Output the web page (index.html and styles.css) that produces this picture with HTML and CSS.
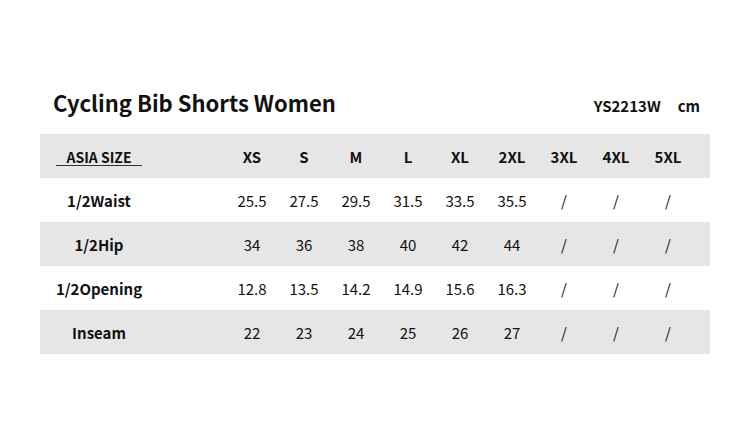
FILE: index.html
```html
<!DOCTYPE html>
<html>
<head>
<meta charset="utf-8">
<link rel="stylesheet" href="styles.css">
</head>
<body>
<div class="page">
  <div class="heading">
    <h1 class="title">Cycling Bib Shorts Women</h1>
    <div class="meta"><span class="code">YS2213W</span><span class="unit">cm</span></div>
  </div>
  <div class="table">
    <div class="row shade head">
      <div class="label"><span class="asia">ASIA SIZE</span></div>
      <div class="cell">XS</div><div class="cell">S</div><div class="cell">M</div><div class="cell">L</div><div class="cell">XL</div><div class="cell">2XL</div><div class="cell">3XL</div><div class="cell">4XL</div><div class="cell">5XL</div>
    </div>
    <div class="row">
      <div class="label">1/2Waist</div>
      <div class="cell">25.5</div><div class="cell">27.5</div><div class="cell">29.5</div><div class="cell">31.5</div><div class="cell">33.5</div><div class="cell">35.5</div><div class="cell">/</div><div class="cell">/</div><div class="cell">/</div>
    </div>
    <div class="row shade">
      <div class="label">1/2Hip</div>
      <div class="cell">34</div><div class="cell">36</div><div class="cell">38</div><div class="cell">40</div><div class="cell">42</div><div class="cell">44</div><div class="cell">/</div><div class="cell">/</div><div class="cell">/</div>
    </div>
    <div class="row">
      <div class="label">1/2Opening</div>
      <div class="cell">12.8</div><div class="cell">13.5</div><div class="cell">14.2</div><div class="cell">14.9</div><div class="cell">15.6</div><div class="cell">16.3</div><div class="cell">/</div><div class="cell">/</div><div class="cell">/</div>
    </div>
    <div class="row shade">
      <div class="label">Inseam</div>
      <div class="cell">22</div><div class="cell">23</div><div class="cell">24</div><div class="cell">25</div><div class="cell">26</div><div class="cell">27</div><div class="cell">/</div><div class="cell">/</div><div class="cell">/</div>
    </div>
  </div>
</div>
</body>
</html>
```

FILE: styles.css
```css
html, body {
  margin: 0;
  padding: 0;
  background: #fff;
}
body {
  font-family: "Noto Sans CJK SC", "Noto Sans", sans-serif;
  color: #111;
}
.page {
  padding: 84px 40px 0 40px;
  width: 670px;
}
.heading {
  display: flex;
  justify-content: space-between;
  align-items: baseline;
  padding: 0 10px 0 13px;
  height: 50px;
}
.title {
  margin: 0;
  font-size: 22px;
  font-weight: 700;
  line-height: 36px;
}
.meta {
  font-size: 15px;
  font-weight: 700;
  display: flex;
  gap: 17px;
}
.table {
  display: flex;
  flex-direction: column;
}
.row {
  display: grid;
  grid-template-columns: 186px repeat(9, 52px);
  height: 44px;
  align-items: center;
  font-size: 15px;
}
.shade {
  background: #e6e6e6;
}
.label {
  font-weight: 700;
  text-align: center;
  padding-right: 68px;
}
.cell {
  text-align: center;
}
.head .cell {
  font-weight: 700;
}
.asia {
  display: inline-block;
  padding: 0 10px;
  border-bottom: 1px solid #333;
  line-height: 16px;
  font-size: 14px;
}
```
